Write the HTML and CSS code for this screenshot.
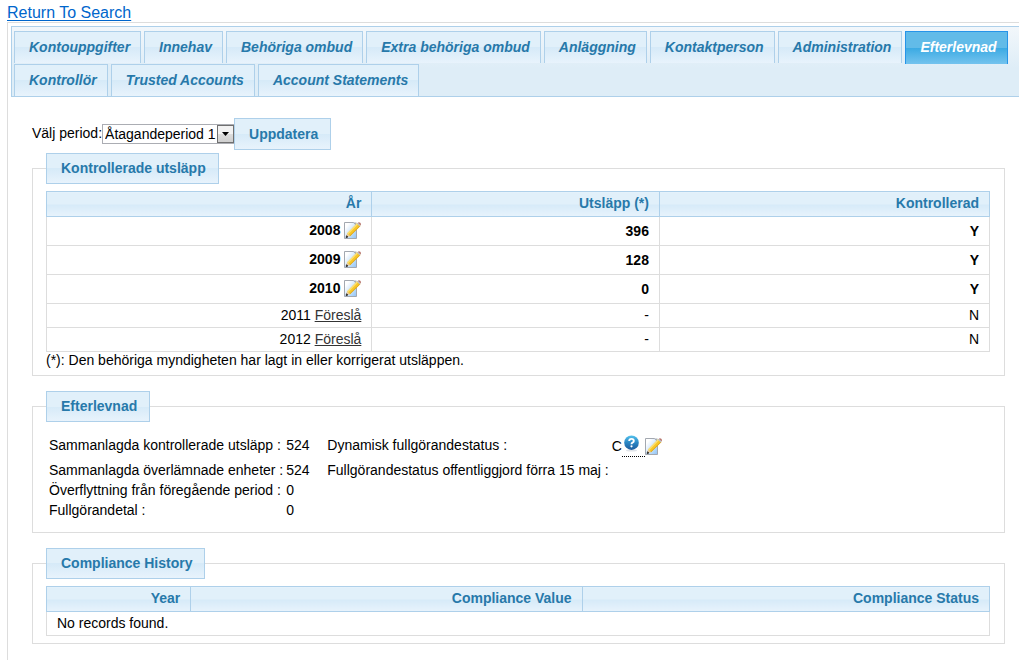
FILE: index.html
```html
<!DOCTYPE html>
<html lang="sv">
<head>
<meta charset="utf-8">
<title>Efterlevnad</title>
<link rel="stylesheet" href="styles.css">
</head>
<body>
<svg class="defs" aria-hidden="true">
  <defs>
    <linearGradient id="paper" x1="0" y1="0" x2="1" y2="1"><stop offset="0.2" stop-color="#fff"/><stop offset="1" stop-color="#8fc3f5"/></linearGradient>
    <linearGradient id="ball" x1="0" y1="0" x2="0" y2="1"><stop offset="0" stop-color="#55c4ee"/><stop offset="0.5" stop-color="#2a86c4"/><stop offset="1" stop-color="#1c5a9c"/></linearGradient>
    <symbol id="edit" viewBox="0 0 17 17">
      <path d="M.5 .5H9.5L12.500 3.500V16.500H.5Z" fill="url(#paper)" stroke="#a3a8b0"/>
      <path d="M9 .5L12.500 4V.5Z" fill="#a9afb8"/>
      <path d="M3 11.600L13.300 1L16.400 3.900L6 14.300Z" fill="#f8c828"/>
      <path d="M3 11.600L13.300 1L14.200 1.900L4 12.500Z" fill="#fbe07a"/>
      <path d="M5.500 13.700L15.900 3.400L16.400 3.900L6 14.300Z" fill="#dca01c"/>
      <path d="M13.800 1L14.700 .2Q15.500 0 16.300 .8T17 2.600L16.200 3.500Z" fill="#b97870"/>
      <path d="M12.900 1.500L13.700 .8L16.500 3.600L15.700 4.400Z" fill="#b9bec6"/>
      <path d="M3 11.600L6 14.300L2 15.600Z" fill="#e8c99a"/>
      <path d="M2.500 13.700L4 15L2 15.700Z" fill="#222" stroke="#222" stroke-width=".6"/>
    </symbol>
    <symbol id="help" viewBox="0 0 17 17">
      <ellipse cx="8.500" cy="15.600" rx="5.500" ry="1" fill="#dfe3e8"/>
      <circle cx="8.500" cy="7.700" r="7.300" fill="url(#ball)"/>
      <path d="M6.200 6Q6.200 3.900 8.500 3.900T10.800 5.900Q10.800 7.100 9.500 7.700Q8.500 8.200 8.500 9.300" fill="none" stroke="#fff" stroke-width="1.900"/>
      <circle cx="8.500" cy="11.300" r="1.100" fill="#fff"/>
    </symbol>
  </defs>
</svg>
<a class="back" href="#">Return To Search</a>
<main class="panel">
  <nav class="tabs">
    <a class="tab" href="#">Kontouppgifter</a>
    <a class="tab" href="#">Innehav</a>
    <a class="tab" href="#">Behöriga ombud</a>
    <a class="tab" href="#">Extra behöriga ombud</a>
    <a class="tab" href="#">Anläggning</a>
    <a class="tab" href="#">Kontaktperson</a>
    <a class="tab" href="#">Administration</a>
    <a class="tab active" href="#" aria-current="page">Efterlevnad</a>
    <a class="tab" href="#">Kontrollör</a>
    <a class="tab" href="#">Trusted Accounts</a>
    <a class="tab" href="#">Account Statements</a>
  </nav>
  <div class="content">
    <form class="period">
      <label for="period">Välj period:</label>
      <span class="picker">
        <select id="period"><option>Åtagandeperiod 1</option></select>
        <span class="arrow" aria-hidden="true"><svg width="7" height="4" viewBox="0 0 7 4"><path d="M0 0H7L3.500 4Z"/></svg></span>
      </span>
      <button class="button" type="button">Uppdatera</button>
    </form>

    <fieldset class="group">
      <legend>Kontrollerade utsläpp</legend>
      <table class="grid emissions">
        <thead><tr><th class="year">År</th><th class="amount">Utsläpp (*)</th><th>Kontrollerad</th></tr></thead>
        <tbody>
          <tr class="verified"><td>2008 <a href="#" aria-label="Redigera 2008"><svg class="icon"><use href="#edit"/></svg></a></td><td>396</td><td>Y</td></tr>
          <tr class="verified"><td>2009 <a href="#" aria-label="Redigera 2009"><svg class="icon"><use href="#edit"/></svg></a></td><td>128</td><td>Y</td></tr>
          <tr class="verified"><td>2010 <a href="#" aria-label="Redigera 2010"><svg class="icon"><use href="#edit"/></svg></a></td><td>0</td><td>Y</td></tr>
          <tr><td>2011 <a class="propose" href="#">Föreslå</a></td><td>-</td><td>N</td></tr>
          <tr><td>2012 <a class="propose" href="#">Föreslå</a></td><td>-</td><td>N</td></tr>
        </tbody>
      </table>
      <p class="note">(*): Den behöriga myndigheten har lagt in eller korrigerat utsläppen.</p>
    </fieldset>

    <fieldset class="group summary">
      <legend>Efterlevnad</legend>
      <table class="facts">
        <tr class="first"><td class="name">Sammanlagda kontrollerade utsläpp :</td><td class="value">524</td><td class="status">Dynamisk fullgörandestatus :</td><td><span class="code">C<a class="help" href="#" aria-label="Hjälp"><svg class="icon"><use href="#help"/></svg></a><a class="edit" href="#" aria-label="Redigera status"><svg class="icon"><use href="#edit"/></svg></a></span></td></tr>
        <tr><td>Sammanlagda överlämnade enheter :</td><td>524</td><td>Fullgörandestatus offentliggjord förra 15 maj :</td><td></td></tr>
        <tr><td>Överflyttning från föregående period :</td><td>0</td><td></td><td></td></tr>
        <tr><td>Fullgörandetal :</td><td>0</td><td></td><td></td></tr>
      </table>
    </fieldset>

    <fieldset class="group">
      <legend>Compliance History</legend>
      <table class="grid history">
        <thead><tr><th class="year">Year</th><th class="amount">Compliance Value</th><th>Compliance Status</th></tr></thead>
        <tbody><tr><td class="empty" colspan="3">No records found.</td></tr></tbody>
      </table>
    </fieldset>
  </div>
</main>
</body>
</html>
```
FILE: styles.css
```css
:root {
  --glass: linear-gradient(#e1f0fa 0, #e1f0fa 50%, #d6eaf8 50%, #e8f3fc 100%);
  --edge: #aed0ea;
  --line: #dddddd;
  --ink: #2779aa;
}
* { box-sizing: border-box; }
body {
  margin: 0;
  padding: 3px 0 0 7px;
  background: #fff;
  color: #000;
  font: 14px/16px "Liberation Sans", Arial, sans-serif;
}
.defs { position: absolute; width: 0; height: 0; }
.back {
  display: block;
  width: fit-content;
  color: #0066cc;
  font-size: 16px;
  line-height: 19px;
  text-underline-offset: 2px;
}
.panel {
  padding: 3px 0 15px 3px;
  border: solid var(--line);
  border-width: 1px 0 0 1px;
}
.tabs {
  display: flex;
  flex-wrap: wrap;
  gap: 1px 3px;
  padding: 4px 2px 0;
  border: 1px solid var(--edge);
  border-right: 0;
  background: linear-gradient(#f2f7fb, #deedf7 60%);
}
.tab {
  height: 32px;
  padding: 7px 10px 0 14px;
  border: 1px solid var(--edge);
  border-bottom: 0;
  background: var(--glass);
  color: var(--ink);
  font-style: italic;
  font-weight: bold;
  line-height: 17px;
  text-decoration: none;
}
.tab.active {
  height: 33px;
  margin-bottom: -1px;
  border-color: #2694e8;
  background: linear-gradient(#62bbe8 50%, #3baae3 50%, #74c3ee);
  color: #fff;
}
.content { padding: 21px 14px 0 21px; }
.period { display: flex; align-items: center; margin-bottom: 3px; }
.period label { margin-top: -2px; }
.picker { position: relative; }
.picker select {
  display: block;
  width: 132px;
  height: 20px;
  padding: 0 17px 0 2px;
  appearance: none;
  border: 1px solid #abadb3;
  border-radius: 0;
  background: #fff;
  color: #000;
  font: inherit;
}
.arrow {
  position: absolute;
  top: 1px;
  right: 0;
  display: grid;
  place-items: center;
  width: 17px;
  height: 18px;
  border: 1px solid #707070;
  background: linear-gradient(#f2f2f2 50%, #dddddd 50%, #cfcfcf);
  pointer-events: none;
}
.button, .group legend {
  padding: 6px 12px 7px 14px;
  border: 1px solid var(--edge);
  background: var(--glass);
  color: var(--ink);
  font: bold 14px/16px "Liberation Sans", Arial, sans-serif;
}
.button { height: 32px; }
.group {
  min-width: 0;
  margin: 0 0 15px;
  padding: 7px 14px 7px 13px;
  border: 1px solid var(--line);
}
.group legend { height: 31px; }
.grid { width: 100%; border-collapse: collapse; table-layout: fixed; }
.grid th, .grid td {
  height: 24px;
  padding: 0 10px 1px;
  border: 1px solid var(--line);
  text-align: right;
}
.grid th {
  height: 25px;
  padding-bottom: 2px;
  border-color: var(--edge);
  background: var(--glass);
  color: var(--ink);
}
.grid .verified td { height: 29px; font-weight: bold; }
.emissions .year { width: 34.5%; }
.emissions .amount { width: 30.5%; }
.history .year { width: 15.3%; }
.history .amount { width: 41.5%; }
.grid .empty { text-align: left; }
.propose { color: #333; }
.note { margin: 0; }
.icon { width: 17px; height: 17px; vertical-align: middle; }
.summary { padding-bottom: 12px; }
.facts { border-collapse: collapse; white-space: nowrap; }
.facts td { height: 20px; padding: 0 0 0 3px; }
.facts .first td { height: 31px; padding-top: 1px; }
.facts .name { width: 234px; }
.facts .value { width: 41px; }
.facts .status { width: 280px; }
.code { display: flex; align-items: center; padding-top: 2px; }
.help { width: 23px; height: 22px; padding-left: 1px; border-bottom: 1px dotted #000; }
.help .icon, .edit .icon { display: block; }
```
